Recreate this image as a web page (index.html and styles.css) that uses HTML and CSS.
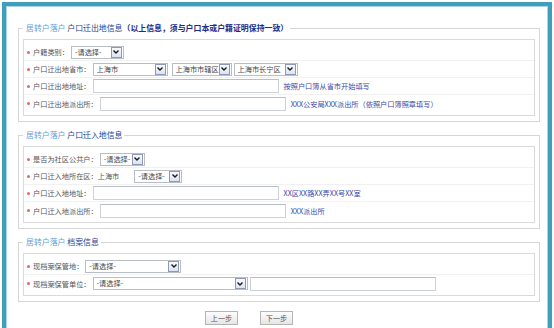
FILE: index.html
```html
<!DOCTYPE html>
<html lang="zh-CN">
<head>
    <meta charset="UTF-8">
    <meta name="viewport" content="width=device-width, initial-scale=1.0">
    <title>居转户落户</title>
    <link rel="stylesheet" href="styles.css">
</head>
<body>
    <div class="frame">
        <!-- 户口迁出地 -->
        <fieldset class="group">
            <legend><span class="tag">居转户落户</span> 户口迁出地信息<b>（以上信息，须与户口本或户籍证明保持一致）</b></legend>
            <div class="box">
                <div class="row">
                    <span class="label">户籍类别：</span>
                    <span class="select" style="width: 53px"><select><option>-请选择-</option></select><span class="arrow"><svg viewBox="0 0 8 8"><path d="M1.5 2.5 L4 5 L6.5 2.5" /></svg></span></span>
                </div>
                <div class="row">
                    <span class="label">户口迁出地省市：</span>
                    <span class="select" style="width: 75px"><select><option>上海市</option></select><span class="arrow"><svg viewBox="0 0 8 8"><path d="M1.5 2.5 L4 5 L6.5 2.5" /></svg></span></span>
                    <span class="select gap" style="width: 60px"><select><option>上海市市辖区</option></select><span class="arrow"><svg viewBox="0 0 8 8"><path d="M1.5 2.5 L4 5 L6.5 2.5" /></svg></span></span>
                    <span class="select gap-s" style="width: 64px"><select><option>上海市长宁区</option></select><span class="arrow"><svg viewBox="0 0 8 8"><path d="M1.5 2.5 L4 5 L6.5 2.5" /></svg></span></span>
                </div>
                <div class="row">
                    <span class="label">户口迁出地地址：</span>
                    <input class="text" type="text">
                    <span class="hint">按照户口簿从省市开始填写</span>
                </div>
                <div class="row">
                    <span class="label">户口迁出地派出所：</span>
                    <input class="text" type="text">
                    <span class="hint">XXX公安局XXX派出所（依照户口簿照章填写）</span>
                </div>
            </div>
        </fieldset>

        <!-- 户口迁入地 -->
        <fieldset class="group">
            <legend><span class="tag">居转户落户</span> 户口迁入地信息</legend>
            <div class="box">
                <div class="row">
                    <span class="label">是否为社区公共户：</span>
                    <span class="select" style="width: 45px"><select><option>-请选择-</option></select><span class="arrow"><svg viewBox="0 0 8 8"><path d="M1.5 2.5 L4 5 L6.5 2.5" /></svg></span></span>
                </div>
                <div class="row">
                    <span class="label">户口迁入地所在区：</span>
                    <span class="city">上海市</span>
                    <span class="select gap-l" style="width: 48px"><select><option>-请选择-</option></select><span class="arrow"><svg viewBox="0 0 8 8"><path d="M1.5 2.5 L4 5 L6.5 2.5" /></svg></span></span>
                </div>
                <div class="row">
                    <span class="label">户口迁入地地址：</span>
                    <input class="text" type="text">
                    <span class="hint">XX区XX路XX弄XX号XX室</span>
                </div>
                <div class="row">
                    <span class="label">户口迁入地派出所：</span>
                    <input class="text" type="text">
                    <span class="hint">XXX派出所</span>
                </div>
            </div>
        </fieldset>

        <!-- 档案 -->
        <fieldset class="group">
            <legend><span class="tag">居转户落户</span> 档案信息</legend>
            <div class="box">
                <div class="row">
                    <span class="label">现档案保管地：</span>
                    <span class="select gap-s" style="width: 96px"><select><option>-请选择-</option></select><span class="arrow"><svg viewBox="0 0 8 8"><path d="M1.5 2.5 L4 5 L6.5 2.5" /></svg></span></span>
                </div>
                <div class="row">
                    <span class="label">现档案保管单位：</span>
                    <span class="select" style="width: 155px"><select><option>-请选择-</option></select><span class="arrow"><svg viewBox="0 0 8 8"><path d="M1.5 2.5 L4 5 L6.5 2.5" /></svg></span></span>
                    <input class="text gap-s" type="text">
                </div>
            </div>
        </fieldset>

        <div class="actions">
            <button class="btn" type="button">上一步</button>
            <button class="btn" type="button">下一步</button>
        </div>
    </div>
</body>
</html>
```

FILE: styles.css
```css
body {
    margin: 0;
    background-color: white;
    font-family: "Noto Sans CJK SC", "Liberation Sans", sans-serif;
    font-size: 7.2px;
    color: #555;
}

.frame {
    margin: 2px 0 0 2px;
    width: 550px;
    height: 326px;
    box-sizing: border-box;
    border: 4px solid #3f9dbd;
    border-bottom: none;
    box-shadow: inset 1px 1px 0 #a9d6e6, inset -1px 0 0 #a9d6e6;
    padding-top: 17px;
    overflow: hidden;
}

.group {
    margin: 0 8px 8px 12px;
    padding: 6px 4px 5px 4px;
    border: 1px solid #d6d6d6;
    min-width: 0;
}

.group legend {
    padding: 0 2px 0 3px;
    height: 10px;
    line-height: 10px;
    font-size: 7.9px;
    color: #1d3f8e;
}

.group legend .tag {
    color: #5f9fd8;
}

.group legend b {
    color: #1b2a86;
}

.box {
    border: 1px solid #dadada;
    padding: 4px 0 3px 0;
}

.row {
    display: flex;
    align-items: center;
    height: 17px;
    box-sizing: border-box;
    padding-left: 3px;
    border-bottom: 1px solid #f1f1f1;
}

.row:last-child {
    border-bottom: none;
}

.label {
    display: flex;
    align-items: center;
    white-space: nowrap;
    color: #555;
}

.label::before {
    content: "";
    width: 3px;
    height: 3px;
    border-radius: 50%;
    background-color: #e26a6a;
    margin-right: 3px;
}

.select {
    display: inline-flex;
    align-items: center;
    height: 13px;
    box-sizing: border-box;
    margin-left: 2px;
    border: 1px solid #b9bec6;
    background-color: white;
}

.select select {
    appearance: none;
    -webkit-appearance: none;
    flex: 1;
    min-width: 0;
    height: 11px;
    border: none;
    padding: 0 0 0 3px;
    margin: 0;
    background: none;
    font-family: inherit;
    font-size: 7.2px;
    line-height: 11px;
    color: #444;
}

.select .arrow {
    display: flex;
    align-items: center;
    justify-content: center;
    width: 9px;
    height: 9px;
    margin-right: 1px;
    border: 1px solid #8c9ab8;
    background: linear-gradient(#f8f9fd, #dde3f2);
}

.select .arrow svg {
    width: 8px;
    height: 8px;
    fill: none;
    stroke: #1a1a1a;
    stroke-width: 1.4;
}

.gap {
    margin-left: 4px;
}

.gap-s {
    margin-left: 2px;
}

.gap-l {
    margin-left: 15px;
}

.city {
    margin-left: 0;
    color: #555;
}

.text {
    width: 186px;
    height: 14px;
    box-sizing: border-box;
    margin: 0 0 0 2px;
    border: 1px solid #cdd1d8;
    border-top-color: #b9bdc4;
    padding: 0;
}

.hint {
    margin-left: 5px;
    white-space: nowrap;
    color: #3b47a6;
}

.actions {
    display: flex;
    gap: 22px;
    padding: 1px 0 0 199px;
}

.btn {
    width: 33px;
    height: 14px;
    padding: 0;
    border: 1px solid #b5b5b5;
    background: linear-gradient(#fdfdfd, #e6e6e6);
    font-family: inherit;
    font-size: 7.2px;
    color: #555;
}
```
